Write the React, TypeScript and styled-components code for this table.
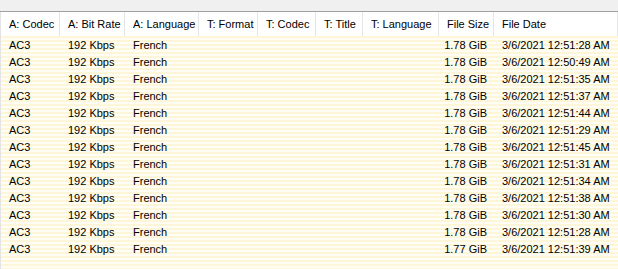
import styled, { createGlobalStyle } from "styled-components"

const GlobalStyle = createGlobalStyle`
body {
  margin: 0;
  background: #ffffff;
}
`

const columns = "59px 65px 74px 59px 58px 47px 76px 55px 1fr"

const Wrapper = styled.div`
width: 618px;
height: 269px;
overflow: hidden;
display: flex;
flex-direction: column;
font-family: "Liberation Sans", Arial, sans-serif;
font-size: 11px;
color: #000;
background: #ffffff;
`

const TopBand = styled.div`
height: 11px;
background: #f0f0f0;
border-bottom: 1px solid #a0a0a0;
`

const Header = styled.div`
display: grid;
grid-template-columns: ${columns};
height: 24px;
background: #ffffff;
border-left: 1px solid #e3e3e3;
`

const HeaderCell = styled.div`
display: flex;
align-items: center;
padding-left: 8px;
border-right: 1px solid #e5e5e5;
white-space: nowrap;
overflow: hidden;
`

const Body = styled.div`
flex: 1;
border-left: 1px solid #e3e3e3;
background: repeating-linear-gradient(
  to bottom,
  #fef6d8 0px,
  #fef6d8 2px,
  #fffdf4 2px,
  #fffdf4 4px
);
`

const Row = styled.div`
display: grid;
grid-template-columns: ${columns};
height: 17px;
`

const Cell = styled.div<{ $right?: boolean }>`
display: flex;
align-items: center;
justify-content: ${(p) => (p.$right ? "flex-end" : "flex-start")};
padding-left: 8px;
padding-right: ${(p) => (p.$right ? "7px" : "0")};
white-space: nowrap;
overflow: hidden;
`

const headers = [
  "A: Codec",
  "A: Bit Rate",
  "A: Language",
  "T: Format",
  "T: Codec",
  "T: Title",
  "T: Language",
  "File Size",
  "File Date",
]

const rows = [
  ["1.78 GiB", "3/6/2021 12:51:28 AM"],
  ["1.78 GiB", "3/6/2021 12:50:49 AM"],
  ["1.78 GiB", "3/6/2021 12:51:35 AM"],
  ["1.78 GiB", "3/6/2021 12:51:37 AM"],
  ["1.78 GiB", "3/6/2021 12:51:44 AM"],
  ["1.78 GiB", "3/6/2021 12:51:29 AM"],
  ["1.78 GiB", "3/6/2021 12:51:45 AM"],
  ["1.78 GiB", "3/6/2021 12:51:31 AM"],
  ["1.78 GiB", "3/6/2021 12:51:34 AM"],
  ["1.78 GiB", "3/6/2021 12:51:38 AM"],
  ["1.78 GiB", "3/6/2021 12:51:30 AM"],
  ["1.78 GiB", "3/6/2021 12:51:28 AM"],
  ["1.77 GiB", "3/6/2021 12:51:39 AM"],
]

export default function App() {
  return (
    <>
      <GlobalStyle />
      <Wrapper>
        <TopBand />
        <Header>
          {headers.map((h) => (
            <HeaderCell key={h}>{h}</HeaderCell>
          ))}
        </Header>
        <Body>
          {rows.map(([size, date], i) => (
            <Row key={i}>
              <Cell>AC3</Cell>
              <Cell>192 Kbps</Cell>
              <Cell>French</Cell>
              <Cell />
              <Cell />
              <Cell />
              <Cell />
              <Cell $right>{size}</Cell>
              <Cell>{date}</Cell>
            </Row>
          ))}
        </Body>
      </Wrapper>
    </>
  )
}
